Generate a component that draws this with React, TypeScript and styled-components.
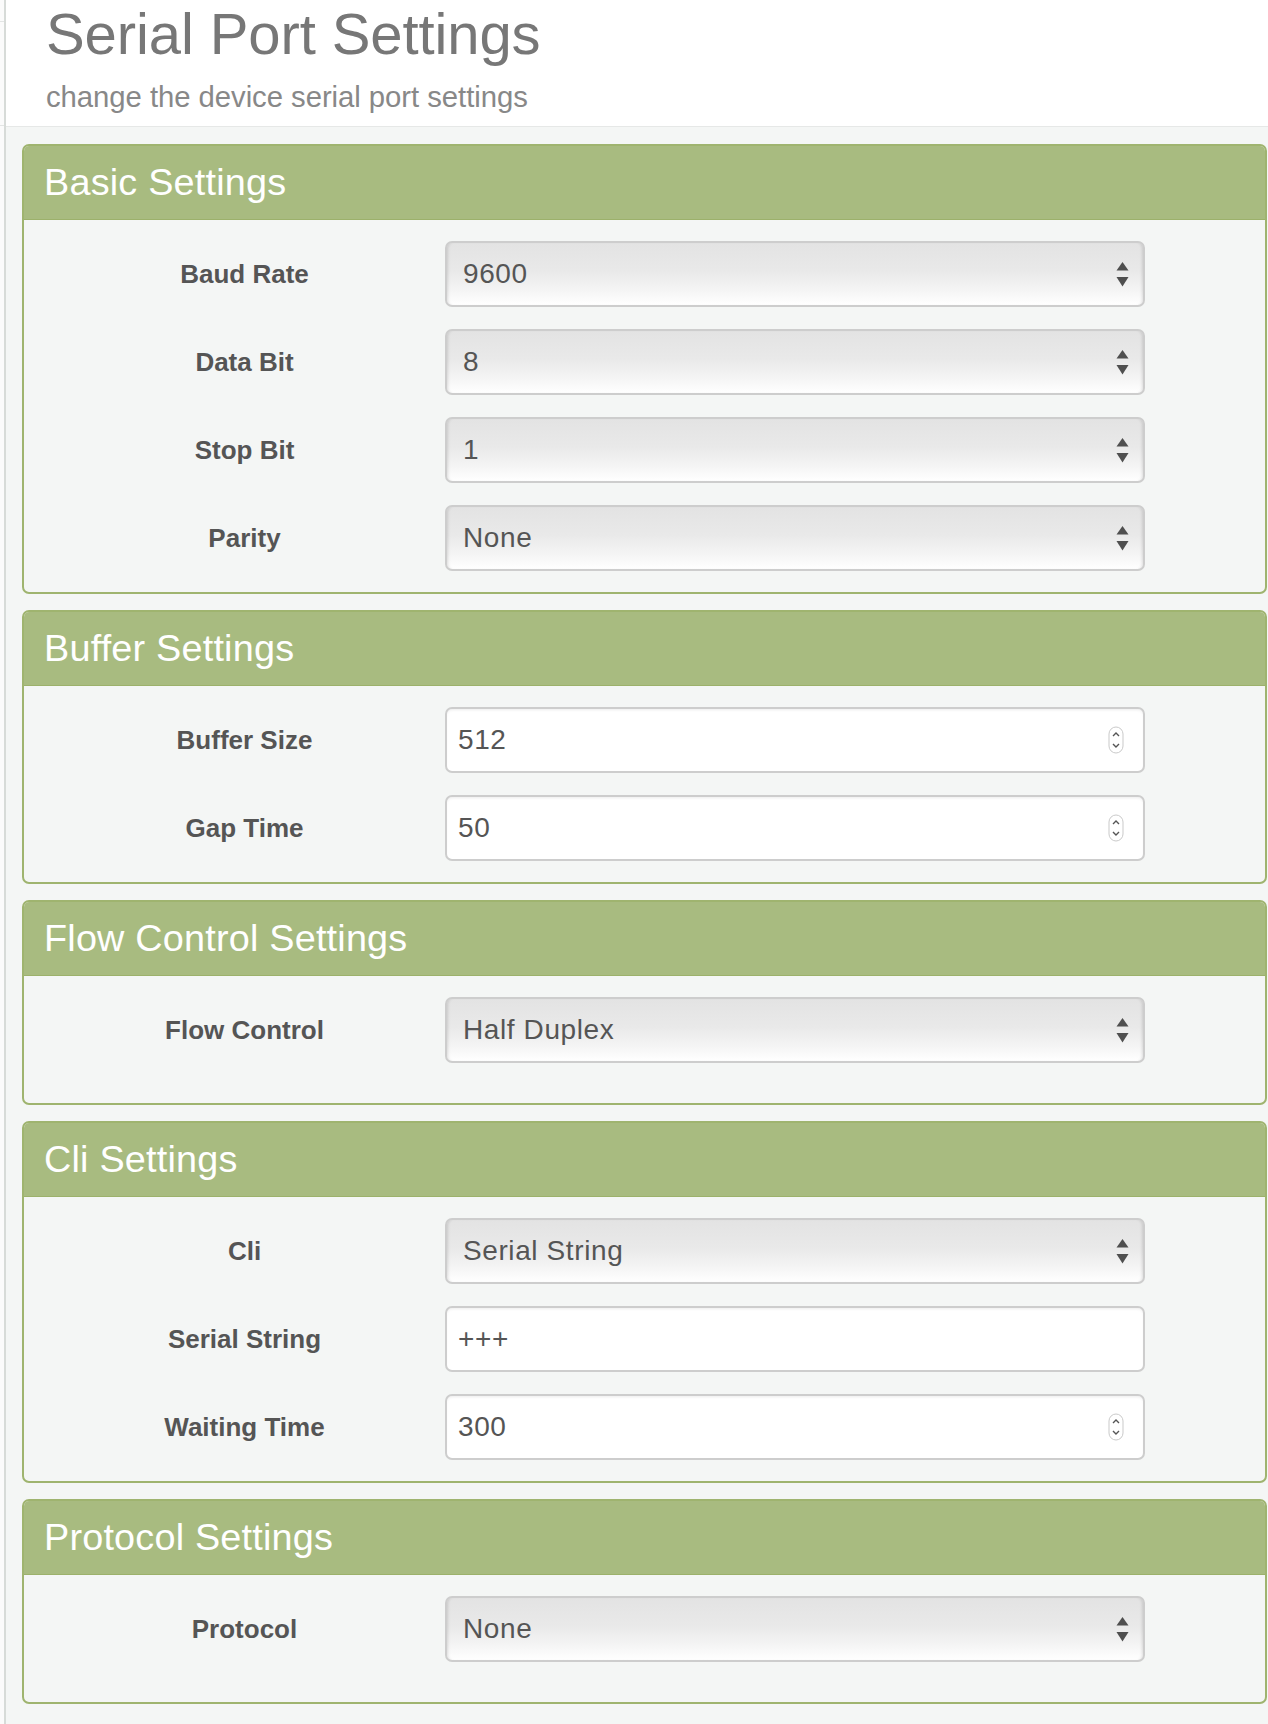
import React from "react";
import styled, { createGlobalStyle } from "styled-components";

const GlobalStyle = createGlobalStyle`
  html, body {
    margin: 0;
    padding: 0;
    background: #f4f6f5;
  }
  body {
    font-family: "Liberation Sans", Arial, Helvetica, sans-serif;
    color: #555;
  }
  * { box-sizing: border-box; }
`;

const Page = styled.div`
  display: flex;
  min-height: 1724px;
  background: #f4f6f5;
`;

const SideStrip = styled.div`
  width: 6px;
  flex: 0 0 6px;
  background: #fbfbfb;
  border-right: 2px solid #d7dbd8;
  display: flex;
  flex-direction: column;
`;

const StripMark = styled.div<{ $h: number }>`
  height: ${(p) => p.$h}px;
  border-bottom: 1px solid #e3e5e4;
`;

const Main = styled.main`
  flex: 1;
  display: flex;
  flex-direction: column;
`;

const PageHeader = styled.header`
  height: 127px;
  background: #ffffff;
  border-bottom: 1px solid #e6e8e7;
  padding: 5px 0 0 40px;
`;

const Title = styled.h1`
  margin: 0;
  font-size: 58px;
  line-height: 58px;
  font-weight: 400;
  color: #777;
  letter-spacing: -0.1px;
`;

const Subtitle = styled.p`
  margin: 19px 0 0;
  font-size: 29.3px;
  line-height: 29px;
  color: #888;
  letter-spacing: -0.05px;
`;

const Panels = styled.div`
  display: flex;
  flex-direction: column;
  gap: 16px;
  padding: 17px 1px 0 16px;
`;

const Panel = styled.section`
  border: 2px solid #9fb46f;
  border-radius: 7px;
  background: #f4f6f5;
  overflow: hidden;
`;

const PanelHeader = styled.h2`
  margin: 0;
  height: 74px;
  background: #a8bb80;
  border-bottom: 1px solid #9cb16b;
  color: #fff;
  font-size: 37.8px;
  font-weight: 400;
  line-height: 73px;
  padding-left: 20px;
  letter-spacing: 0.2px;
`;

const PanelBody = styled.div<{ $bottom: number }>`
  display: grid;
  grid-template-columns: 401px 700px;
  row-gap: 22px;
  padding: 21px 0 ${(p) => p.$bottom}px 20px;
`;

const Label = styled.div`
  font-size: 26px;
  font-weight: 700;
  color: #555;
  text-align: center;
  align-self: center;
`;

const FieldBase = styled.div`
  height: 66px;
  border: 2px solid #cdcdcd;
  border-radius: 7px;
  display: flex;
  align-items: center;
  justify-content: space-between;
  font-size: 28px;
  letter-spacing: 0.6px;
  color: #555;
`;

const SelectField = styled(FieldBase)`
  padding: 0 14px 0 16px;
  background: linear-gradient(#e3e3e3 0%, #e9e9e9 45%, #f4f4f4 75%, #ffffff 100%);
  box-shadow: inset 3px 0 3px -2px rgba(0, 0, 0, 0.12),
    inset -3px 0 3px -2px rgba(0, 0, 0, 0.12);
`;

const InputField = styled(FieldBase)<{ $spin: boolean }>`
  padding: 0 ${(p) => (p.$spin ? 19 : 14)}px 0 11px;
  background: #ffffff;
  box-shadow: inset 0 2px 3px -1px rgba(0, 0, 0, 0.08);
`;

const Value = styled.span`
  white-space: nowrap;
`;

const SelectArrows = () => (
  <svg width="13" height="25" viewBox="0 0 13 25" aria-hidden>
    <polygon points="6.5,0 12.5,8.5 0.5,8.5" fill="#4f4f4f" />
    <polygon points="0.5,15 12.5,15 6.5,24.5" fill="#4f4f4f" />
  </svg>
);

const Spinner = () => (
  <svg width="16" height="28" viewBox="0 0 16 28" aria-hidden>
    <rect x="1" y="1" width="14" height="26" rx="7" fill="#fff" stroke="#c9c9c9" />
    <polyline points="5,10 8,7 11,10" fill="none" stroke="#555" strokeWidth="1.4" />
    <polyline points="5,18 8,21 11,18" fill="none" stroke="#555" strokeWidth="1.4" />
  </svg>
);

type Field = { label: string; kind: "select" | "number" | "text"; value: string };

type Section = { title: string; fields: Field[] };

const sections: Section[] = [
  {
    title: "Basic Settings",
    fields: [
      { label: "Baud Rate", kind: "select", value: "9600" },
      { label: "Data Bit", kind: "select", value: "8" },
      { label: "Stop Bit", kind: "select", value: "1" },
      { label: "Parity", kind: "select", value: "None" },
    ],
  },
  {
    title: "Buffer Settings",
    fields: [
      { label: "Buffer Size", kind: "number", value: "512" },
      { label: "Gap Time", kind: "number", value: "50" },
    ],
  },
  {
    title: "Flow Control Settings",
    fields: [{ label: "Flow Control", kind: "select", value: "Half Duplex" }],
  },
  {
    title: "Cli Settings",
    fields: [
      { label: "Cli", kind: "select", value: "Serial String" },
      { label: "Serial String", kind: "text", value: "+++" },
      { label: "Waiting Time", kind: "number", value: "300" },
    ],
  },
  {
    title: "Protocol Settings",
    fields: [{ label: "Protocol", kind: "select", value: "None" }],
  },
];

const renderField = (f: Field) => {
  if (f.kind === "select") {
    return (
      <SelectField>
        <Value>{f.value}</Value>
        <SelectArrows />
      </SelectField>
    );
  }
  return (
    <InputField $spin={f.kind === "number"}>
      <Value>{f.value}</Value>
      {f.kind === "number" && <Spinner />}
    </InputField>
  );
};

export default function App() {
  return (
    <>
      <GlobalStyle />
      <Page>
        <SideStrip>
          <StripMark $h={22} />
          <StripMark $h={104} />
        </SideStrip>
        <Main>
          <PageHeader>
            <Title>Serial Port Settings</Title>
            <Subtitle>change the device serial port settings</Subtitle>
          </PageHeader>
          <Panels>
            {sections.map((s) => (
              <Panel key={s.title}>
                <PanelHeader>{s.title}</PanelHeader>
                <PanelBody $bottom={s.fields.length === 1 ? 40 : 21}>
                  {s.fields.map((f) => (
                    <React.Fragment key={f.label}>
                      <Label>{f.label}</Label>
                      {renderField(f)}
                    </React.Fragment>
                  ))}
                </PanelBody>
              </Panel>
            ))}
          </Panels>
        </Main>
      </Page>
    </>
  );
}
